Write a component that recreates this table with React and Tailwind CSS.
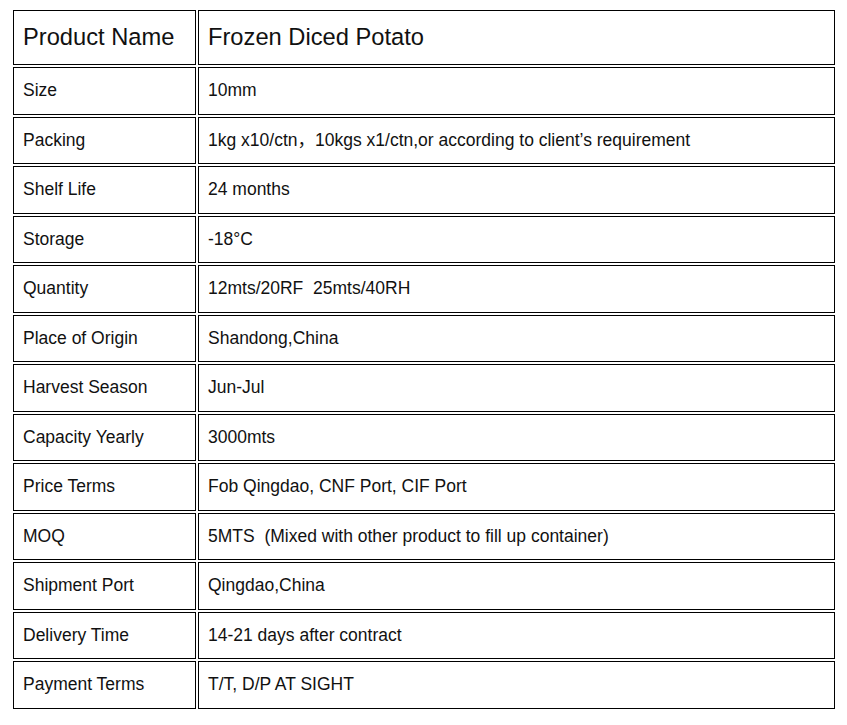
import React from 'react';

const rows = [
  ['Size', '10mm'],
  ['Packing', '1kg x10/ctn，10kgs x1/ctn,or according to client’s requirement'],
  ['Shelf Life', '24 months'],
  ['Storage', '-18°C'],
  ['Quantity', '12mts/20RF\u00a0 25mts/40RH'],
  ['Place of Origin', 'Shandong,China'],
  ['Harvest Season', 'Jun-Jul'],
  ['Capacity Yearly', '3000mts'],
  ['Price Terms', 'Fob Qingdao, CNF Port, CIF Port'],
  ['MOQ', '5MTS\u00a0 (Mixed with other product to fill up container)'],
  ['Shipment Port', 'Qingdao,China'],
  ['Delivery Time', '14-21 days after contract'],
  ['Payment Terms', 'T/T, D/P AT SIGHT'],
];

export default function App() {
  return (
    <div className="bg-white min-h-[725px] pl-[11px] pt-[8px] text-[#111]" style={{ fontFamily: '"Liberation Sans", Arial, "Noto Sans CJK SC", sans-serif' }}>
      <table className="border-separate border-spacing-[2px] w-[826px] table-fixed">
        <colgroup>
          <col className="w-[183px]" />
          <col />
        </colgroup>
        <tbody>
          <tr className="h-[55px]">
            <td className="border border-black pl-[9px] text-[23.7px] leading-none">Product Name</td>
            <td className="border border-black pl-[9px] text-[23.7px] leading-none">Frozen Diced Potato</td>
          </tr>
          {rows.map(([k, v]) => (
            <tr key={k} className="h-[47.5px]">
              <td className="border border-black pl-[9px] text-[17.5px] leading-none">{k}</td>
              <td className="border border-black pl-[9px] text-[17.5px] leading-none whitespace-pre">{v}</td>
            </tr>
          ))}
        </tbody>
      </table>
    </div>
  );
}
